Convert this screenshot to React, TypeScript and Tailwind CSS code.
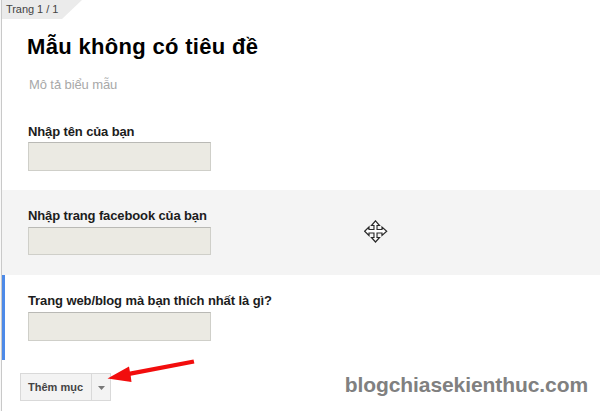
type FieldProps = {
  label: string;
  spacing: string;
  className: string;
  boxClass: string;
};

function Field({ label, spacing, className, boxClass }: FieldProps) {
  return (
    <section className={`pl-[26px] pt-[18px] ${className}`}>
      <label className={`block h-[18px] whitespace-nowrap text-[13px] leading-[16px] font-bold text-[#1c1c1c] ${spacing}`}>
        {label}
      </label>
      <div className={`w-[183px] border border-[#cfcfc9] border-t-[#b9b9b5] bg-[#ebeae3] ${boxClass}`} />
    </section>
  );
}

function MoveCursor() {
  return (
    <svg className="absolute left-[364px] top-[220px]" width="24" height="23" viewBox="0 0 24 23" fill="#fff" stroke="#2a2a2a" strokeWidth="1.2">
      <path d="M11.5 .8 L15.5 5.5 H13 V9.5 H18 V7 L22.7 11.2 L18 15.5 V13 H13 V17.5 H15.5 L11.5 22 L7.5 17.5 H10 V13 H5 V15.5 L.6 11.2 L5 7 V9.5 H10 V5.5 H7.5 Z" />
      <path d="M11.5 6V17M6 11.2H17" stroke="#fff" />
    </svg>
  );
}

export default function App() {
  return (
    <div className="relative flex h-[411px] w-[600px] overflow-hidden bg-white font-['Liberation_Sans',Arial,sans-serif]">
      <div className="w-[2px] shrink-0 border-r border-[#c9c9c9] bg-[#f8f8f8]" />
      <main className="flex min-w-0 flex-1 flex-col">
        <header className="h-[106px] shrink-0">
          <div className="h-[19px] w-[80px] bg-[#ebebeb] pl-[4px] [clip-path:polygon(0_0,100%_0,60px_100%,0_100%)]">
            <span className="block whitespace-nowrap text-[11px] leading-[18px] tracking-[-0.05px] text-[#444]">Trang 1 / 1</span>
          </div>
          <h1 className="mt-[14px] h-[28px] whitespace-nowrap pl-[25px] text-[22px] leading-[28px] font-bold tracking-[0.32px] text-black">Mẫu không có tiêu đề</h1>
          <p className="mt-[16px] whitespace-nowrap pl-[27px] text-[13px] leading-[16px] tracking-[-0.1px] text-[#a8a8a8]">Mô tả biểu mẫu</p>
        </header>
        <Field label="Nhập tên của bạn" spacing="tracking-[-0.12px]" className="h-[84px]" boxClass="h-[29px]" />
        <Field label="Nhập trang facebook của bạn" spacing="tracking-[-0.12px]" className="h-[85px] bg-[#f4f4f4]" boxClass="mt-px h-[28px]" />
        <Field label="Trang web/blog mà bạn thích nhất là gì?" spacing="tracking-[-0.1px]" className="h-[85px] border-l-[3px] border-[#4d8ae8] !pl-[23px]" boxClass="mt-px h-[29px]" />
        <footer className="flex h-[51px] items-start justify-between pl-[18px] pr-[12px] pt-[13px]">
          <button className="flex h-[28px] w-[91px] border border-[#d9d9d9] bg-[#f3f3f3] text-[#444]">
            <span className="h-full w-[71px] whitespace-nowrap border-r border-[#d9d9d9] pl-[7px] text-left text-[11px] leading-[26px] font-bold">Thêm mục</span>
            <span className="flex h-full flex-1 items-center justify-center pt-px">
              <svg width="7" height="4" viewBox="0 0 7 4" fill="#777"><path d="M0 0H7L3.5 4Z" /></svg>
            </span>
          </button>
          <span className="-mt-px whitespace-nowrap text-[21px] leading-[26px] font-bold tracking-[-0.08px] text-[#808080]">blogchiasekienthuc.com</span>
        </footer>
      </main>
      <MoveCursor />
      <svg className="absolute left-[106px] top-[357px]" width="92" height="28" viewBox="0 0 92 28" fill="#f20d0d">
        <path d="M1.5 21.6 L23 9.5 L23.9 14.4 L87.5 2.6 L88.4 6.4 L24.7 18.8 L25.5 25 Z" />
      </svg>
    </div>
  );
}
